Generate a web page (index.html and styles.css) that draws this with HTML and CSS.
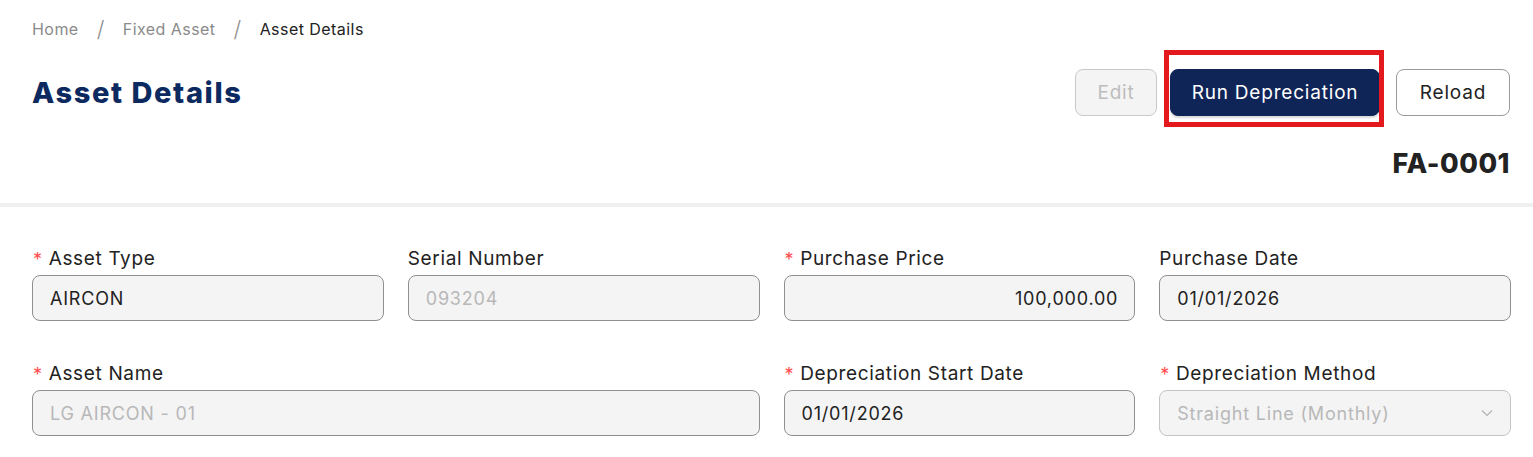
FILE: index.html
```html
<!DOCTYPE html>
<html lang="en">
<head>
<meta charset="utf-8">
<title>Asset Details</title>
<link rel="stylesheet" href="styles.css">
</head>
<body>
<header class="page-head">
  <nav class="breadcrumb">
    <a class="crumb">Home</a>
    <span class="sep">/</span>
    <a class="crumb">Fixed Asset</a>
    <span class="sep">/</span>
    <span class="crumb current">Asset Details</span>
  </nav>
  <div class="head-row">
    <h1 class="title">Asset Details</h1>
    <div class="actions">
      <button class="btn btn-disabled" disabled>Edit</button>
      <span class="highlight">
        <button class="btn btn-primary">Run Depreciation</button>
      </span>
      <button class="btn btn-default">Reload</button>
    </div>
  </div>
  <div class="code">FA-0001</div>
</header>
<div class="divider"></div>
<form class="form">
  <div class="field">
    <label class="label"><span class="req">*</span>Asset Type</label>
    <div class="input">AIRCON</div>
  </div>
  <div class="field">
    <label class="label">Serial Number</label>
    <div class="input muted">093204</div>
  </div>
  <div class="field">
    <label class="label"><span class="req">*</span>Purchase Price</label>
    <div class="input right">100,000.00</div>
  </div>
  <div class="field">
    <label class="label">Purchase Date</label>
    <div class="input">01/01/2026</div>
  </div>
  <div class="field span2">
    <label class="label"><span class="req">*</span>Asset Name</label>
    <div class="input muted">LG AIRCON - 01</div>
  </div>
  <div class="field">
    <label class="label"><span class="req">*</span>Depreciation Start Date</label>
    <div class="input">01/01/2026</div>
  </div>
  <div class="field">
    <label class="label"><span class="req">*</span>Depreciation Method</label>
    <div class="input muted select">
      <span>Straight Line (Monthly)</span>
      <svg class="chev" width="12" height="8" viewBox="0 0 12 8"><path d="M1 1.5 L6 6.5 L11 1.5" fill="none" stroke="#b3b3b3" stroke-width="1.2"/></svg>
    </div>
  </div>
</form>
</body>
</html>
```

FILE: styles.css
```css
* , *::before, *::after { box-sizing: border-box; }
html, body { margin: 0; background: #fff; }
body {
  font-family: "Inter", "Noto Sans", sans-serif;
  color: #222;
}
.page-head {
  padding: 18px 23px 0 32px;
}
.breadcrumb {
  display: flex;
  align-items: center;
  height: 22px;
  font-size: 16px;
  line-height: 22px;
  letter-spacing: 0.45px;
}
.crumb { color: #8a8a8a; }
.crumb.current { color: #222; }
.sep {
  color: #8f8f8f;
  font-size: 22px;
  font-weight: 300;
  margin: 0 18px 0 18px;
}
.head-row {
  margin-top: 29px;
  display: flex;
  justify-content: space-between;
  align-items: center;
  height: 47px;
}
.title {
  margin: 0;
  font-size: 29px;
  font-weight: 800;
  color: #0c2a5f;
  letter-spacing: 1.6px;
}
.actions {
  display: flex;
  align-items: center;
}
.btn {
  height: 47px;
  border-radius: 8px;
  font-family: inherit;
  font-size: 19px;
  letter-spacing: 0.8px;
  padding: 0;
  border: 1px solid #9a9a9a;
  background: #fff;
  color: #222;
}
.btn-disabled {
  width: 82px;
  background: #f4f4f4;
  border-color: #c9c9c9;
  color: #bdbdbd;
}
.btn-primary {
  width: 210px;
  background: #0f2557;
  border-color: #0f2557;
  color: #fff;
  box-shadow: 0 2px 2px rgba(0,0,0,0.15);
}
.btn-default { width: 114px; }
.highlight {
  position: relative;
  margin: 0 16px 0 13px;
  display: flex;
}
.highlight::after {
  content: "";
  position: absolute;
  left: -6px;
  top: -19px;
  width: 220px;
  height: 77px;
  border: 5px solid #e3191d;
  pointer-events: none;
}
.code {
  margin-top: 30px;
  text-align: right;
  font-size: 27px;
  line-height: 36px;
  font-weight: 800;
  color: #222;
  letter-spacing: 0.5px;
}
.divider {
  margin-top: 21px;
  height: 4px;
  background: #f0f0f0;
}
.form {
  padding: 39px 22px 0 32px;
  display: grid;
  grid-template-columns: repeat(4, 1fr);
  column-gap: 24px;
  row-gap: 40px;
}
.span2 { grid-column: span 2; }
.label {
  display: flex;
  align-items: center;
  height: 24px;
  font-size: 19px;
  letter-spacing: 0.65px;
  color: #222;
  margin-bottom: 5px;
}
.req {
  color: #ff4d4f;
  font-size: 18px;
  margin: 3px 6px 0 1px;
}
.input {
  height: 46px;
  border: 1px solid #8f8f8f;
  border-radius: 8px;
  background: #f4f4f4;
  padding: 0 16px 0 17px;
  display: flex;
  align-items: center;
  font-size: 18px;
  letter-spacing: 0.8px;
  color: #222;
}
.input.muted { color: #b8b8b8; }
.input.right { justify-content: flex-end; }
.select { justify-content: space-between; border-color: #c4c4c4; }
.chev { margin-right: 1px; }
```
